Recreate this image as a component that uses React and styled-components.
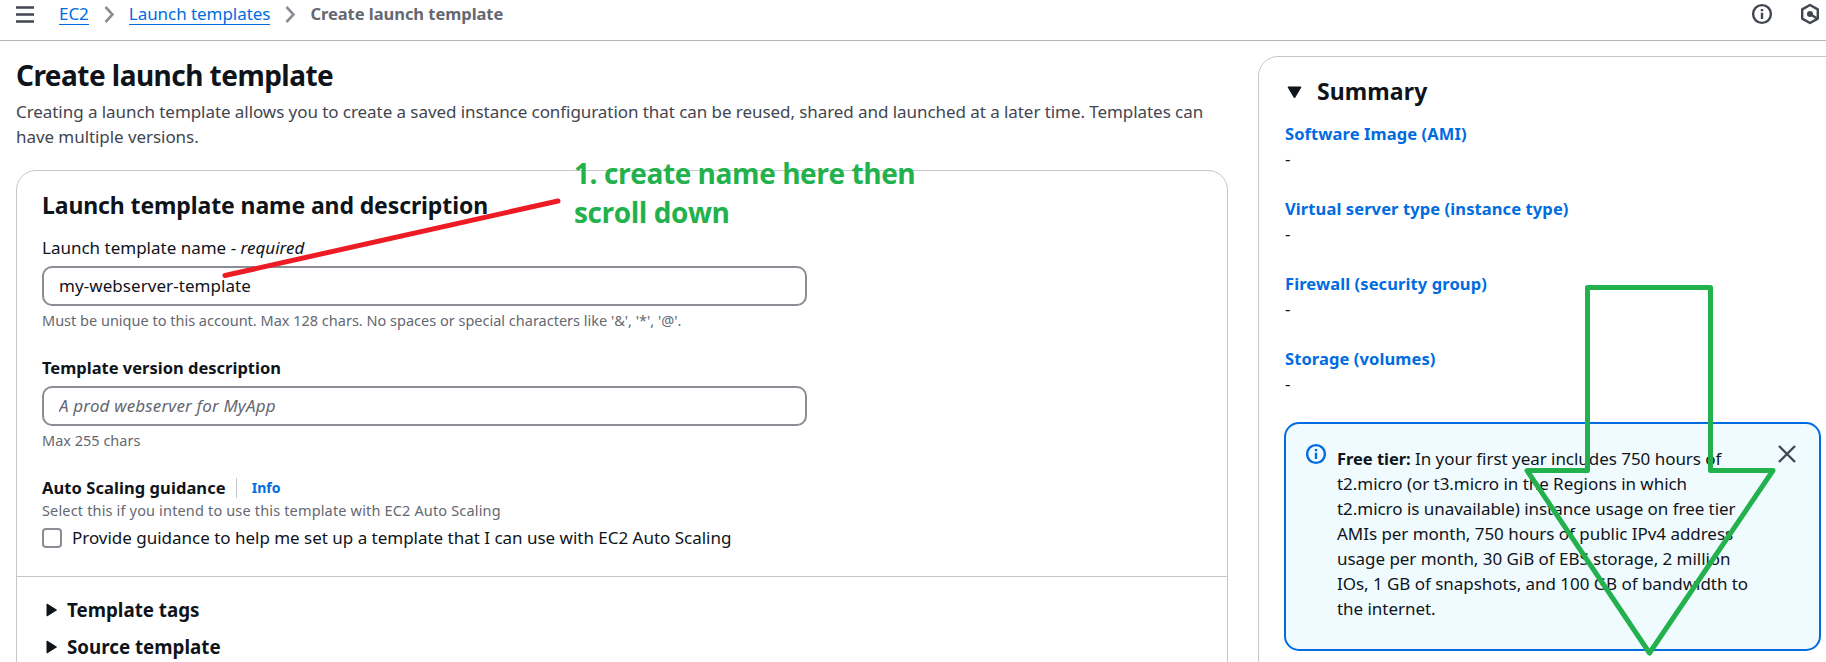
import React from "react";
import styled, { createGlobalStyle, css } from "styled-components";

const GlobalStyle = createGlobalStyle`
  *, *::before, *::after { box-sizing: border-box; }
  body {
    margin: 0;
    background: #fff;
    color: #0f141a;
    font-family: "Noto Sans", "Open Sans", sans-serif;
    font-size: 17px;
    line-height: 25px;
    overflow: hidden;
  }
  h1, h2, h3, p { margin: 0; }
`;

const Page = styled.div`
  position: relative;
  width: 1826px;
  height: 662px;
  overflow: hidden;
`;

const Toolbar = styled.header`
  display: flex;
  align-items: flex-start;
  height: 41px;
  padding: 3px 5px 0 16px;
  border-bottom: 1px solid #b4b4bb;
`;

const MenuIcon = styled.svg`
  width: 18px;
  height: 17px;
  margin: 3px 25px 0 0;
`;

const Crumbs = styled.nav`
  display: flex;
  flex: 1;
  white-space: nowrap;
`;

const crumbText = css`
  line-height: 22px;
  height: 22px;
`;

const CrumbLink = styled.a`
  ${crumbText}
  color: #006ce0;
  border-bottom: 1px solid #006ce0;
  letter-spacing: -0.05px;
`;

const CrumbCurrent = styled.span`
  ${crumbText}
  color: #656871;
  font-size: 16.5px;
  font-weight: 700;
  letter-spacing: -0.04px;
`;

const CrumbArrow = styled.svg`
  width: 10px;
  height: 17px;
  margin: 3px 15px 0;
`;

const ToolbarIcons = styled.div`
  display: flex;
  gap: 26px;
`;

const Icon = styled.svg`
  display: block;
  flex: none;
  width: 22px;
  height: 22px;
  color: ${(p) => p.$color || "#424650"};
`;

const Main = styled.main`
  display: flex;
  align-items: flex-start;
  padding: 15px 0 0 16px;
`;

const FormColumn = styled.section`
  flex: none;
  width: 1212px;
`;

const PageTitle = styled.h1`
  font-size: 28px;
  line-height: 38px;
  letter-spacing: -0.53px;
`;

const Intro = styled.p`
  margin: 5px 0 21px;
  color: #424650;
  letter-spacing: -0.064px;
  white-space: nowrap;
`;

const Card = styled.div`
  height: 640px;
  border: 1px solid #c6c6cd;
  border-radius: 20px;
`;

const CardBody = styled.div`
  padding: 19px 25px 26px;
  border-bottom: 1px solid #c6c6cd;
`;

const CardTitle = styled.h2`
  font-size: 23px;
  line-height: 30px;
  letter-spacing: -0.11px;
`;

const Field = styled.div`
  margin-top: ${(p) => p.$gap}px;
`;

const Label = styled.div`
  display: flex;
  align-items: center;
  font-size: ${(p) => (p.$bold ? 16.5 : 17)}px;
  font-weight: ${(p) => (p.$bold ? 700 : 400)};
  letter-spacing: ${(p) => p.$spacing || 0}px;
  white-space: pre;
`;

const Input = styled.input`
  display: block;
  width: 765px;
  height: 40px;
  margin: 6px 0 4px;
  padding: 0 15px 1px;
  border: 2px solid #8c8c94;
  border-radius: 10px;
  background: #fff;
  color: #0f141a;
  font: inherit;
  letter-spacing: 0.06px;
  outline: none;
  &::placeholder {
    color: #656871;
    opacity: 1;
    font-style: italic;
    letter-spacing: 0.16px;
  }
`;

const Hint = styled.div`
  color: #656871;
  font-size: 14.5px;
  line-height: 20px;
  letter-spacing: ${(p) => p.$spacing || 0}px;
`;

const InfoLink = styled.a`
  margin-left: 10px;
  padding-left: 15px;
  border-left: 1px solid #c6c6cd;
  color: #006ce0;
  font-size: 14px;
  line-height: 20px;
`;

const CheckRow = styled.label`
  display: flex;
  align-items: center;
  gap: 10px;
  margin-top: 5px;
  letter-spacing: -0.015px;
`;

const Checkbox = styled.span`
  width: 20px;
  height: 20px;
  margin-top: 1px;
  border: 2px solid #8c8c94;
  border-radius: 4px;
`;

const Expanders = styled.div`
  display: flex;
  flex-direction: column;
  gap: 12px;
  padding: 20px 25px;
`;

const Expander = styled.h3`
  display: flex;
  align-items: center;
  gap: 10px;
  font-size: 18.75px;
  line-height: 25px;
  padding-left: 4px;
`;

const Caret = styled.svg`
  flex: none;
  width: ${(p) => p.$w}px;
  height: ${(p) => p.$h}px;
`;

const SummaryPanel = styled.aside`
  flex: none;
  width: 590px;
  height: 700px;
  margin-left: 30px;
  padding: 19px 25px 19px 26px;
  border: 1px solid #c6c6cd;
  border-radius: 20px;
`;

const SummaryTitle = styled(CardTitle)`
  display: flex;
  align-items: center;
  gap: 15px;
  padding-left: 2px;
  margin-bottom: 15px;
  letter-spacing: 0.1px;
`;

const TitleCaret = styled(Caret)`
  margin-top: 2px;
`;

const SummaryItem = styled.div`
  margin-bottom: 25px;
`;

const SummaryLink = styled.a`
  display: block;
  color: #006ce0;
  font-size: 16.5px;
  font-weight: 700;
  letter-spacing: 0.1px;
`;

const Alert = styled.div`
  display: flex;
  align-items: flex-start;
  width: 537px;
  height: 229px;
  margin: 26px 0 0 -1px;
  padding: 19px 21px 0 19px;
  border: 2px solid #006ce0;
  border-radius: 15px;
  background: #f0fbff;
`;

const AlertText = styled.p`
  flex: 1;
  padding: 3px 0 0 10px;
  white-space: nowrap;
  letter-spacing: -0.04px;
  b { font-size: 16.5px; }
`;

const Annotations = styled.svg`
  position: absolute;
  inset: 0;
  width: 1826px;
  height: 662px;
  pointer-events: none;
`;

const Note = styled.div`
  position: absolute;
  left: 574px;
  top: 154px;
  color: #22b14c;
  font-family: "Open Sans", "Noto Sans", sans-serif;
  font-size: 28px;
  font-weight: 700;
  line-height: 39px;
  letter-spacing: -0.42px;
  white-space: nowrap;
`;

const InfoIcon = (props) => (
  <Icon viewBox="0 0 22 22" {...props}>
    <circle cx="11" cy="11" r="8.9" fill="none" stroke="currentColor" strokeWidth="2.4" />
    <path d="M11 9.800V16M11 6v2.300" stroke="currentColor" strokeWidth="2.400" />
  </Icon>
);

const HexIcon = () => (
  <Icon viewBox="0 0 22 22">
    <path d="M11 2l7.800 4.400v9.200L11 20l-7.800-4.400V6.400z" fill="none" stroke="currentColor" strokeWidth="2.400" strokeLinejoin="round" />
    <circle cx="11" cy="11" r="3" fill="currentColor" />
    <path d="M11 11l7 4.500" stroke="currentColor" strokeWidth="2.600" />
  </Icon>
);

const CloseIcon = () => (
  <Icon viewBox="0 0 22 22">
    <path d="M3 3l16 16M19 3L3 19" stroke="currentColor" strokeWidth="2.400" />
  </Icon>
);

const Chevron = () => (
  <CrumbArrow viewBox="0 0 10 17">
    <path d="M1.500 1l7 7.500-7 7.500" fill="none" stroke="#8c8c94" strokeWidth="2.600" />
  </CrumbArrow>
);

const RightCaret = () => (
  <Caret $w={11} $h={14} viewBox="0 0 11 14">
    <path d="M1 1l9.500 6-9.500 6z" fill="#0f141a" stroke="#0f141a" strokeLinejoin="round" />
  </Caret>
);

const summary = [
  "Software Image (AMI)",
  "Virtual server type (instance type)",
  "Firewall (security group)",
  "Storage (volumes)",
];

export default function App() {
  return (
    <Page>
      <GlobalStyle />
      <Toolbar>
        <MenuIcon viewBox="0 0 18 17">
          <path d="M0 1.500h18M0 8.500h18M0 15.500h18" stroke="#424650" strokeWidth="2.400" />
        </MenuIcon>
        <Crumbs>
          <CrumbLink>EC2</CrumbLink>
          <Chevron />
          <CrumbLink>Launch templates</CrumbLink>
          <Chevron />
          <CrumbCurrent>Create launch template</CrumbCurrent>
        </Crumbs>
        <ToolbarIcons>
          <InfoIcon />
          <HexIcon />
        </ToolbarIcons>
      </Toolbar>
      <Main>
        <FormColumn>
          <PageTitle>Create launch template</PageTitle>
          <Intro>
            Creating a launch template allows you to create a saved instance configuration that can be reused, shared and launched at a later time. Templates can
            <br />
            have multiple versions.
          </Intro>
          <Card>
            <CardBody>
              <CardTitle>Launch template name and description</CardTitle>
              <Field $gap={15}>
                <Label>Launch template name - <i>required</i></Label>
                <Input defaultValue="my-webserver-template" />
                <Hint>
                  Must be unique to this account. Max 128 chars. No spaces or special characters like '&amp;', '*', '@'.
                </Hint>
              </Field>
              <Field $gap={25}>
                <Label $bold>Template version description</Label>
                <Input placeholder="A prod webserver for MyApp" />
                <Hint>Max 255 chars</Hint>
              </Field>
              <Field $gap={25}>
                <Label $bold $spacing={0.07}>
                  Auto Scaling guidance<InfoLink>Info</InfoLink>
                </Label>
                <Hint $spacing={0.16}>Select this if you intend to use this template with EC2 Auto Scaling</Hint>
                <CheckRow>
                  <Checkbox />
                  Provide guidance to help me set up a template that I can use with EC2 Auto Scaling
                </CheckRow>
              </Field>
            </CardBody>
            <Expanders>
              <Expander><RightCaret />Template tags</Expander>
              <Expander><RightCaret />Source template</Expander>
            </Expanders>
          </Card>
        </FormColumn>
        <SummaryPanel>
          <SummaryTitle>
            <TitleCaret $w={15} $h={13} viewBox="0 0 15 13">
              <path d="M1 1h13l-6.500 11z" fill="#0f141a" stroke="#0f141a" strokeLinejoin="round" />
            </TitleCaret>
            Summary
          </SummaryTitle>
          {summary.map((name) => (
            <SummaryItem key={name}>
              <SummaryLink>{name}</SummaryLink>
              -
            </SummaryItem>
          ))}
          <Alert>
            <InfoIcon $color="#006ce0" />
            <AlertText>
              <b>Free tier:</b> In your first year includes 750 hours of
              <br />t2.micro (or t3.micro in the Regions in which
              <br />t2.micro is unavailable) instance usage on free tier
              <br />AMIs per month, 750 hours of public IPv4 address
              <br />usage per month, 30 GiB of EBS storage, 2 million
              <br />IOs, 1 GB of snapshots, and 100 GB of bandwidth to
              <br />the internet.
            </AlertText>
            <CloseIcon />
          </Alert>
        </SummaryPanel>
      </Main>
      <Annotations viewBox="0 0 1826 662">
        <path d="M225 275.500L558 201" fill="none" stroke="#ed1c24" strokeWidth="5" strokeLinecap="round" />
        <path
          d="M1587.500 287.500H1710.500V470.500H1773L1649.500 653L1527 470.500H1587.500Z"
          fill="none"
          stroke="#22b14c"
          strokeWidth="5"
          strokeLinejoin="round"
        />
      </Annotations>
      <Note>
        1. create name here then
        <br />
        scroll down
      </Note>
    </Page>
  );
}
